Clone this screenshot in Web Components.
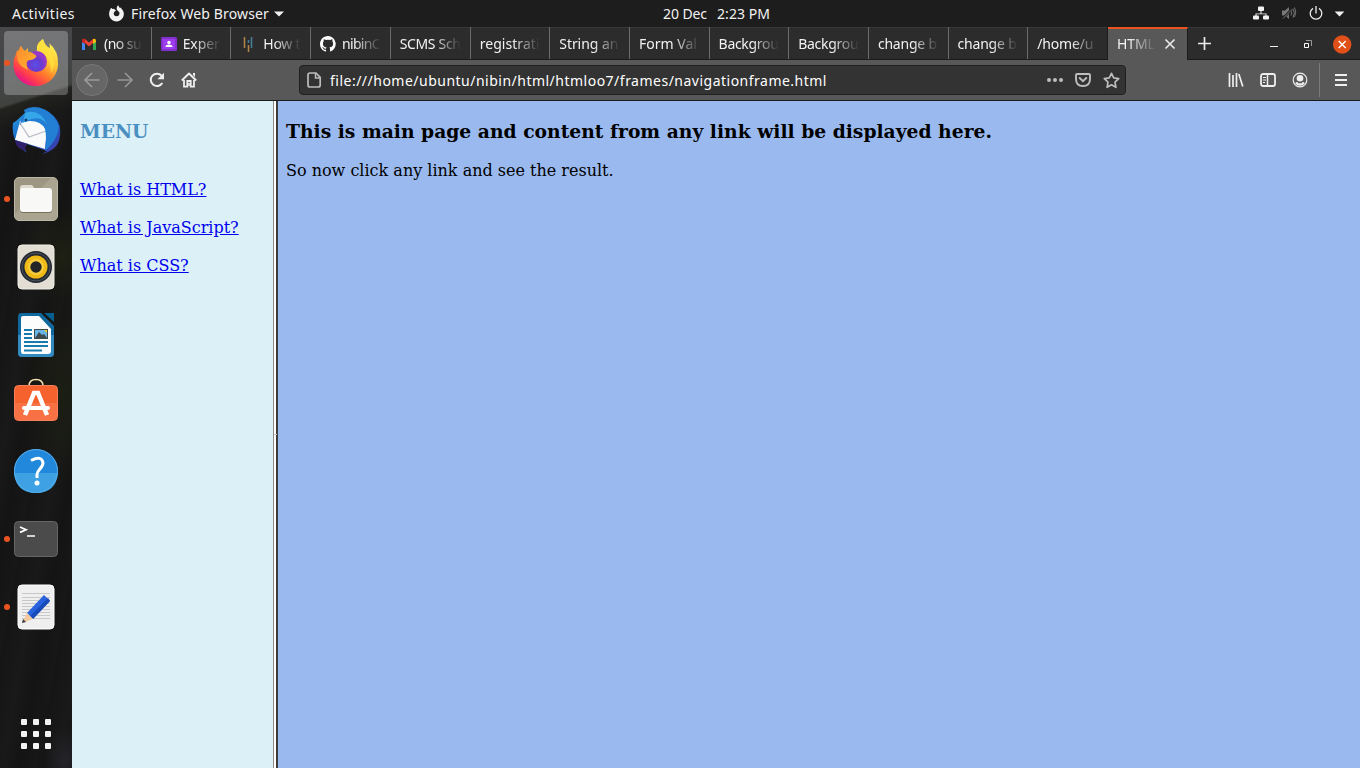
<!DOCTYPE html>
<html lang="en">
<head>
<meta charset="utf-8">
<title>HTML Frames</title>
<style>
html,body{margin:0;height:100%;overflow:hidden;background:#161616}
body{font-family:"Noto Sans","Open Sans",sans-serif;font-size:14px;color:#f2f2f2}
</style>
</head>
<body>
<ubuntu-desktop></ubuntu-desktop>
<script>
const define = (name, html, setup) => customElements.define(name, class extends HTMLElement {
  connectedCallback() {
    if (this.shadowRoot) return;
    const root = this.attachShadow({mode: 'open'});
    root.innerHTML = html;
    if (setup) setup(this, root);
  }
});

define('fit-label', `<style>:host{display:block;white-space:pre;line-height:20px}span{display:inline-block}</style><span></span>`, (host, root) => {
  const span = root.querySelector('span');
  span.textContent = host.getAttribute('text');
  const w = parseFloat(host.getAttribute('w'));
  if (w) {
    const gap = (w - span.getBoundingClientRect().width) / span.textContent.length;
    span.style.letterSpacing = gap.toFixed(3) + 'px';
  }
});

define('top-bar', `<style>
:host{display:grid;grid-template-columns:663px 1fr auto;height:27px;background:#1d1d1d;align-items:center;box-sizing:border-box;color:#f2f2f2}
.l,.c,.r{display:flex;align-items:center}
.l{padding-left:12px}.l svg.fx{margin:0 6px 0 33px}.c{gap:10px}.l .tri{margin-left:5px}
.r{padding:0 15px 2px 0}
svg{display:block}
</style>
<div class="l"><fit-label text="Activities" w="63"></fit-label>
<svg class="fx" width="17" height="17" viewBox="0 0 17 17"><path d="M2.3 4.3 3.2 2.8 4.4 4q.8-.3 1.7 0L8 5.6 6.2 7C5 8.500 6 11.300 8.600 11.300c2.500 0 3.500-2.300 2.500-4.300L9 5C8.200 3 9 1.200 10.400.3c.2 1.300.7 2 1.800 2.700l.9-.6c.2.900.4 1.400 1.100 2.200 3.800 4.500.5 11.800-5.600 11.800C2.300 16.400-.8 9.900 2.300 4.300z" fill="#f2f2f2"/></svg>
<fit-label text="Firefox Web Browser" w="138"></fit-label>
<svg class="tri" width="10" height="6" viewBox="0 0 10 6"><path d="M0 .5h10L5 5.500z" fill="#f2f2f2"/></svg></div>
<div class="c"><fit-label text="20 Dec" w="44"></fit-label><fit-label text="2:23 PM" w="53"></fit-label></div>
<div class="r">
<svg width="16" height="16" viewBox="0 0 16 16" fill="#f2f2f2"><rect x="5" y="1.500" width="6" height="4.500" rx="1"/><rect x="0" y="10.500" width="6" height="4" rx="1"/><rect x="10" y="10.500" width="6" height="4" rx="1"/><path d="M7.500 6v2.500H2.500V11h1V9.300h9V11h1V8.500H8.500V6z"/></svg>
<svg style="margin-left:12px" width="16" height="16" viewBox="0 0 16 16"><g fill="#777"><path d="M1 5.500h3L8 2v12l-4-3.500H1z"/></g><path d="M10 5.500q1.500 2.500 0 5M12 4q2.800 4 0 8.500M13.500 2.500q2.500 5 0 9.500" stroke="#777" fill="none"/><path d="M1.500 14 12.500 2.500" stroke="#1d1d1d" stroke-width="2.500"/><path d="M2 13.500 12 3.500" stroke="#777"/></svg>
<svg style="margin-left:12px" width="14" height="16" viewBox="0 0 14 16"><path d="M4 3.400a5.800 5.800 0 1 0 6 0M7 1v7.500" fill="none" stroke="#eee" stroke-width="1.300"/></svg>
<svg style="margin-left:11px" width="11" height="16" viewBox="0 0 11 16"><path d="M.7 6.500h9.600L5.500 11.500z" fill="#f2f2f2"/></svg>
</div>`);

define('dock-item', `<style>
:host{display:grid;grid-template-columns:72px;place-items:center;height:68px;position:relative}
.box{width:64px;height:64px;border-radius:4px;display:grid;place-items:center}
:host([active]) .box{background:rgba(255,255,255,.25)}
:host([running])::before{content:"";position:absolute;left:4px;top:31px;width:6px;height:6px;border-radius:50%;background:#e95420}
</style><div class="box"><slot></slot></div>`);

define('app-dock', `<style>
:host{display:flex;flex-direction:column;justify-content:space-between;width:72px;box-sizing:border-box;padding:2px 0 0;
background:linear-gradient(162deg,#48484a 0,#444548 48px,#40423f 76px,#22231f 79px,transparent 100px) top/100% 105px no-repeat,
radial-gradient(ellipse at 70% 50%,#1d2012,transparent 70%) 20px 180px/60px 100px no-repeat,
radial-gradient(ellipse at 70% 50%,#1b1e13,transparent 70%) 20px 270px/60px 190px no-repeat,
radial-gradient(ellipse,#24242a,transparent 70%) 45px 700px/40px 68px no-repeat,
repeating-linear-gradient(100deg,#151515 0,#191919 21px,#141414 37px,#171717 55px)}
svg{display:block}
</style>
<div>
<dock-item active running><svg width="48" height="50" viewBox="0 0 48 50"><defs>
<linearGradient id="a" x1=".85" y1=".1" x2=".25" y2=".95"><stop offset="0" stop-color="#fff14f"/><stop offset=".35" stop-color="#ffc233"/><stop offset=".6" stop-color="#ff7b2b"/><stop offset=".82" stop-color="#ff3c4e"/><stop offset="1" stop-color="#e5148a"/></linearGradient>
<radialGradient id="b" cx=".45" cy=".65"><stop offset="0" stop-color="#5750e8"/><stop offset=".6" stop-color="#6a3bd0"/><stop offset="1" stop-color="#9638c9"/></radialGradient>
<linearGradient id="c" x1="0" y1="0" x2="1" y2="1"><stop offset="0" stop-color="#ff8a30"/><stop offset="1" stop-color="#ffb62c"/></linearGradient></defs>
<path d="M4 16 5 12 7 14 9 8q2 4 4 5l3-3v4L23 15 25 12Q24 6 31 1q2 7 7 9 0-3-1-5 10 8 9 22C45 40 35 48 23 48S1 38 1.500 26Q1.500 20 4 16z" fill="url(#a)"/>
<circle cx="24.500" cy="23.500" r="10.500" fill="url(#b)"/>
<path d="M5 16 8.500 8q2 5 6 6 4-1 10 4-1 3-6 4-4 0-4 4 0 4 2 6-9-3-11-10z" fill="url(#c)"/>
<path d="M25 12Q24 5 31 1q1 7 9 14 5 11-1 20 0-14-8-20z" fill="#ffe23e" opacity=".75"/></svg></dock-item>
<dock-item><svg width="50" height="50" viewBox="0 0 50 50"><defs><linearGradient id="t" x1="0" y1="0" x2=".8" y2="1"><stop offset="0" stop-color="#2da9e8"/><stop offset=".45" stop-color="#1769c5"/><stop offset="1" stop-color="#3a3fb0"/></linearGradient></defs>
<path d="M2 17Q0 33 10 42l6 5q-5-7 0-9l20 7-5 3Q48 44 49 29 51 15 38 6 25-3 15 6L5 15z" fill="url(#t)"/>
<path d="M9 15 4 34l30 9Q36 30 35 18 22 12 9 15z" fill="#fafafa"/><path d="m9 17 9 14 17-6" fill="none" stroke="#b9bcc6" stroke-width="1.300"/><path d="M4 34q1 8 8 10l3 1q-2-5 2-7z" fill="#30206b"/>
<path d="M10 19Q8 13 14 7L13 4Q22-2 34 4q11 6 14 17-2 14-14 24 2-14 0-22-4-8-15-8-6 0-11 3z" fill="#237fd3"/><path d="M14 7Q28 2 36 18 30 10 20 13l-8 4z" fill="#36a7e9"/><circle cx="15" cy="14" r="1.500" fill="#123c73"/></svg></dock-item>
<dock-item running><svg width="46" height="46" viewBox="0 0 46 46"><rect x="1.500" y="1.500" width="43" height="43" rx="4.500" fill="#9d9683" stroke="#bdb7a6"/><path d="M2 38 38 2h4q2 0 2 3v36q0 3-3 3H5q-3 0-3-3z" fill="#aaa491"/><path d="M7 12q0-3 3-3h9l3 4v9H7z" fill="#dedacd"/><rect x="7" y="13" width="32" height="24" rx="3" fill="#77705f"/><rect x="7" y="12" width="32" height="24" rx="3" fill="#f8f8f7"/></svg></dock-item>
<dock-item><svg width="38" height="46" viewBox="0 0 38 46"><rect x="1" y="1" width="36" height="44" rx="4" fill="#e2ded3" stroke="#f1eee7"/><circle cx="19" cy="23" r="16" fill="#252b34"/><circle cx="19" cy="23" r="14" fill="none" stroke="#4c5058"/><circle cx="19" cy="23" r="11.500" fill="#efb916"/><circle cx="19" cy="23" r="8" fill="#f7cc3d"/><circle cx="19" cy="23" r="5.700" fill="#222426"/></svg></dock-item>
<dock-item><svg width="38" height="46" viewBox="0 0 38 46"><path d="M4 1h20l13 13v27q0 4-4 4H5q-4 0-4-4V5q0-4 3-4z" fill="#0f699e"/><path d="M1 23h36v18q0 4-4 4H5q-4 0-4-4z" fill="#3189bf"/><path d="M27 1h10v9z" fill="#075f90"/><path d="M4 6q0-2 2-2h16l12 13v22q0 3-3 3H6q-2 0-2-3z" fill="#fcfcfc"/><path d="M7 18h8M7 22h8M7 26h8M7 30h24M7 34h24M7 38.500h18" stroke="#187bad" stroke-width="2"/><rect x="17" y="17" width="14" height="10" fill="#3e4a4c"/><rect x="18" y="18" width="12" height="8" fill="#67b5e8"/><path d="m18 26 4-6 3 3 2-1 3 4z" fill="#3d494d"/><path d="M27 18h3v3z" fill="#f7cc20"/></svg></dock-item>
<dock-item><svg style="margin-top:-4px" width="46" height="46" viewBox="0 0 46 46"><path d="M16 9V8q0-6.500 7-6.500T30 8v1" fill="none" stroke="#f6dfae" stroke-width="1.500"/><rect x="1.500" y="7.500" width="43" height="35" rx="4" fill="#f5622d" stroke="#f6805c"/><path d="M2 25h42v13q0 4-4 4H6q-4 0-4-4z" fill="#f87144"/><path d="m12 37 9-22h4l9 22" fill="none" stroke="#fff" stroke-width="4.500"/><rect x="9" y="28" width="28" height="4" rx="2" fill="#fff"/></svg></dock-item>
<dock-item><svg width="46" height="46" viewBox="0 0 46 46"><circle cx="23" cy="23" r="22" fill="#2288dc"/><path d="M1 25h44Q43 45 23 45T1 25z" fill="#3da1e4"/><circle cx="23" cy="23" r="21.500" fill="none" stroke="#56adeb"/><path d="M18 12.500Q29 7 30 15c0 5-6 7-6 11.500v3.500" fill="none" stroke="#fff" stroke-width="3"/><circle cx="24" cy="35" r="2.500" fill="#fff"/></svg></dock-item>
<dock-item running><svg width="46" height="38" viewBox="0 0 46 38"><rect x="1.500" y="1.500" width="43" height="35" rx="4" fill="#4b4b4b" stroke="#666"/><path d="m7 7 6 2.700-6 2.700" fill="none" stroke="#fff" stroke-width="1.800"/><path d="M14 16h8" stroke="#fff" stroke-width="1.500"/></svg></dock-item>
<dock-item running><svg width="38" height="46" viewBox="0 0 38 46"><rect x="1" y="1" width="36" height="44" rx="4" fill="#efefef" stroke="#fff"/><path d="M5 9.500h28M5 13.500h28M5 16.500h28M5 19.500h28M5 22.500h28M5 25.500h28M5 28.500h28M5 31.500h28M5 34.500h28" stroke="#c8c8c8"/><path d="m10 29 17-18 6 6-17 18z" fill="#2862de"/><path d="m13 32 18-18 2 3-17 18z" fill="#174bb9"/><path d="m10 29-5 10 11-4z" fill="#f2c99f"/><path d="m6 35-1 4 4-1z" fill="#3c3c3c"/></svg></dock-item>
</div>
<dock-item><svg width="30" height="30" viewBox="0 0 30 30" fill="#f2f2f2"><rect width="6" height="6" rx="1"/><rect x="12" width="6" height="6" rx="1"/><rect x="24" width="6" height="6" rx="1"/><rect y="12" width="6" height="6" rx="1"/><rect x="12" y="12" width="6" height="6" rx="1"/><rect x="24" y="12" width="6" height="6" rx="1"/><rect y="24" width="6" height="6" rx="1"/><rect x="12" y="24" width="6" height="6" rx="1"/><rect x="24" y="24" width="6" height="6" rx="1"/></svg></dock-item>`);

define('browser-tab', `<style>
:host{display:flex;align-items:center;flex:0 0 79.67px;height:32px;box-sizing:border-box;padding:1px 9px 0 9px;border-right:1px solid #6b6b6b}
:host([last]){border-right-color:#1c1c1c}
:host([active]){flex-basis:80px;background:#585858;border-top:2px solid #e95420;padding:0 11px 2px 9px;height:33px;border-right-color:#1c1c1c}
.t{flex:1;min-width:0;-webkit-mask-image:linear-gradient(to left,transparent 0,#000 27px);mask-image:linear-gradient(to left,transparent 0,#000 27px)}
::slotted([slot=icon]){display:block;flex:none;margin-right:7px}
::slotted([slot=close]){display:block;flex:none;margin-left:8px}
</style><slot name="icon"></slot><div class="t"><slot></slot></div><slot name="close"></slot>`);

define('tab-strip', `<style>
:host{display:flex;height:33px;background:#2c2c2c;box-sizing:border-box;border-bottom:1px solid #1b1b1b;box-shadow:inset 0 1px #383838}
.plus{margin:9px 0 0 9px;display:block}
.ctl{margin-left:auto;display:flex;align-items:center;padding-right:8px;height:34px}svg{display:block}
</style>
<browser-tab><svg slot="icon" width="16" height="16" viewBox="0 0 16 16"><path d="M1 14V5h3v9z" fill="#4285f4"/><path d="M12 14V5h3v9z" fill="#34a853"/><path d="M1 6V4q1-2 3-1l4 3.500L12 3v4L8 10.500 4 7z" fill="#ea4335"/><path d="M12 3q3-1 3 2v1l-3 2z" fill="#fbbc04"/><path d="M1 5v1l3 2V3Q1 2 1 5z" fill="#c5221f"/></svg><fit-label text="(no su" w="37"></fit-label></browser-tab>
<browser-tab><svg slot="icon" style="margin-right:6px" width="16" height="16" viewBox="0 0 16 16"><rect y="1" width="16" height="14" rx="1.500" fill="#8430ce"/><rect x="2" y="3" width="12" height="10" fill="#9d3cec"/><circle cx="8" cy="6.500" r="1.700" fill="#fff"/><path d="M4.500 11q0-2.500 3.500-2.500t3.500 2.500z" fill="#fff"/></svg><fit-label text="Exper" w="37"></fit-label></browser-tab>
<browser-tab><svg slot="icon" style="margin-right:7px" width="16" height="16" viewBox="0 0 16 16"><path d="M4.500 1v11M8.500 9v7" stroke="#b18447" stroke-width="1.500"/><path d="M11.500 1v11M8.500 4v3" stroke="#477f9b" stroke-width="1.500"/></svg><fit-label text="How t" w="37"></fit-label></browser-tab>
<browser-tab><svg slot="icon" style="margin-right:6px" width="16" height="16" viewBox="0 0 16 16"><path fill="#fff" d="M8 0C3.580 0 0 3.580 0 8c0 3.540 2.290 6.530 5.470 7.590.4.070.55-.17.55-.38v-1.490c-2.230.48-2.690-1.070-2.690-1.070-.36-.92-.89-1.170-.89-1.170-.73-.5.050-.49.050-.49.810.060 1.230.83 1.230.83.72 1.230 1.880.87 2.340.66.070-.52.280-.87.510-1.070-1.780-.2-3.640-.89-3.640-3.950 0-.87.310-1.590.82-2.150-.08-.2-.36-1.020.08-2.120 0 0 .67-.21 2.200.82a7.500 7.500 0 0 1 4 0c1.530-1.040 2.200-.82 2.200-.82.44 1.100.16 1.920.08 2.120.51.560.82 1.270.82 2.150 0 3.070-1.870 3.750-3.650 3.950.290.250.54.730.54 1.480v2.200c0 .21.15.46.55.38A8 8 0 0 0 8 0z"/></svg><fit-label text="nibinC" w="38"></fit-label></browser-tab>
<browser-tab><fit-label text="SCMS Sch" w="61"></fit-label></browser-tab>
<browser-tab><fit-label text="registrati" w="60"></fit-label></browser-tab>
<browser-tab><fit-label text="String an" w="59"></fit-label></browser-tab>
<browser-tab><fit-label text="Form Val" w="58"></fit-label></browser-tab>
<browser-tab><fit-label text="Backgrou" w="60"></fit-label></browser-tab>
<browser-tab><fit-label text="Backgrou" w="60"></fit-label></browser-tab>
<browser-tab><fit-label text="change b" w="59"></fit-label></browser-tab>
<browser-tab><fit-label text="change b" w="59"></fit-label></browser-tab>
<browser-tab last><fit-label text="/home/u" w="56"></fit-label></browser-tab>
<browser-tab active><fit-label text="HTML" w="38"></fit-label><svg slot="close" width="12" height="12" viewBox="0 0 12 12"><path d="m1.500 1.500 9 9m0-9-9 9" stroke="#e8e8e8" stroke-width="1.700"/></svg></browser-tab>
<svg class="plus" width="15" height="15" viewBox="0 0 15 15"><path d="M7.500 1v13M1 7.500h13" stroke="#ececec" stroke-width="1.700"/></svg>
<div class="ctl">
<svg width="8" height="12" viewBox="0 0 8 12"><path d="M0 8.500h8" stroke="#eee"/></svg>
<svg style="margin-left:25px" width="9" height="9" viewBox="0 0 9 9"><path d="M1.500 3.500h4v4h-4z" fill="none" stroke="#fff"/><path d="M3 .5h5.500v5.500" fill="none" stroke="#999"/></svg>
<svg style="margin-left:21px" width="19" height="19" viewBox="0 0 19 19"><circle cx="9.200" cy="9.500" r="9.200" fill="#e2501a"/><path d="m5.700 6 7 7m0-7-7 7" stroke="#fff" stroke-width="1.400"/></svg>
</div>`);

define('nav-toolbar', `<style>
:host{display:flex;align-items:center;height:41px;background:#585858;box-sizing:border-box;border-bottom:1px solid #1b1b1e;padding:0 12px 0 4px}
svg{display:block;flex:none}
.back{width:30px;height:30px;border:1px solid #787878;border-radius:50%;background:#666;display:grid;place-items:center}
.url{display:flex;align-items:center;margin-left:102px;width:827px;height:30px;box-sizing:border-box;background:#333;border:1px solid #202020;border-radius:4px;padding:0 5px 0 6px;color:#fff}
.url fit-label{flex:1;margin-left:8px;padding-top:2px}
.sep{width:1px;height:34px;background:#7b7b7b;margin:0 14px 0 11px}
</style>
<div class="back"><svg width="16" height="16" viewBox="0 0 16 16"><path d="M15.500 8H1m7-7L1 8l7 7" fill="none" stroke="#9a9a9a" stroke-width="1.700"/></svg></div>
<svg style="margin-left:9px" width="16" height="16" viewBox="0 0 16 16"><path d="M.5 8H15M8 1l7 7-7 7" fill="none" stroke="#959595" stroke-width="1.700"/></svg>
<svg style="margin-left:16px" width="16" height="16" viewBox="0 0 16 16"><path d="M13.300 11A6.200 6.200 0 1 1 12.600 3.700" fill="none" stroke="#eee" stroke-width="2"/><path d="M15 .7v6.600H8.400z" fill="#eee"/></svg>
<svg style="margin-left:16px" width="16" height="16" viewBox="0 0 16 16"><path d="m.8 8.500 7.200-7 7.200 7" fill="none" stroke="#eee" stroke-width="1.900" stroke-linejoin="round"/><path d="M3 8v6.700h3.300V9h3.400v5.700H13V8" fill="none" stroke="#eee" stroke-width="1.800"/><path d="M12 1h2v4l-2-2zM7.200 11h1.600v3H7.200z" fill="#eee"/></svg>
<div class="url"><svg width="16" height="18" viewBox="0 0 16 18"><path d="M4 2h6l4.200 4.300V14q0 2-2 2H4q-2 0-2-2V4q0-2 2-2z" fill="none" stroke="#bdbdbd" stroke-width="1.700"/><path d="M9.500 2v5h4.500" fill="none" stroke="#bdbdbd" stroke-width="1.500"/></svg>
<fit-label text="file:///home/ubuntu/nibin/html/htmloo7/frames/navigationframe.html" w="497"></fit-label>
<svg width="16" height="16" viewBox="0 0 16 16" fill="#bdbdbd"><circle cx="2" cy="8" r="2"/><circle cx="8" cy="8" r="2"/><circle cx="14" cy="8" r="2"/></svg>
<svg style="margin-left:12px" width="16" height="16" viewBox="0 0 16 16"><path d="M2 2h12q1 0 1 1v4q0 7-7 7T1 7V3q0-1 1-1z" fill="none" stroke="#bdbdbd" stroke-width="1.900"/><path d="m4.700 6 3.300 3.200L11.300 6" fill="none" stroke="#bdbdbd" stroke-width="1.900" stroke-linecap="round"/></svg>
<svg style="margin-left:12px" width="17" height="17" viewBox="0 0 17 17"><path d="m8.500 1.300 2.200 4.600 5 .7-3.700 3.500.9 5.200-4.400-2.500-4.400 2.500.9-5.200L1.300 6.600l5-.7z" fill="none" stroke="#bdbdbd" stroke-width="1.700" stroke-linejoin="round"/></svg></div>
<svg style="margin-left:auto" width="16" height="16" viewBox="0 0 16 16"><path d="M1.500 1v14M5 3v12M8.500 1v14M10.800 2l4 12.500" stroke="#eee" stroke-width="1.700"/></svg>
<svg style="margin-left:16px" width="16" height="16" viewBox="0 0 16 16"><rect x="1" y="2" width="14" height="12" rx="2" fill="none" stroke="#eee" stroke-width="1.800"/><path d="M7.500 2v12" stroke="#eee" stroke-width="1.500"/><path d="M3 5.500h3M3 8h3M3 10.500h2" stroke="#eee"/></svg>
<svg style="margin-left:16px" width="16" height="16" viewBox="0 0 16 16"><circle cx="8" cy="8" r="6.800" fill="none" stroke="#eee" stroke-width="1.200"/><circle cx="8" cy="6.300" r="3.300" fill="#eee"/><path d="M3.200 11.200q2-2.200 3 0h3.600q1-2.200 3 0Q11 13.800 8 13.800t-4.800-2.600z" fill="#eee"/></svg>
<div class="sep"></div>
<svg width="14" height="16" viewBox="0 0 14 16"><path d="M1 3h12M1 8h12M1 13h12" stroke="#eee" stroke-width="2"/></svg>`);

define('menu-frame', `<style>
:host{display:block;background:#dbf0f7;padding:0 8px;font:16px/19px "DejaVu Serif",serif;color:#000}
h3{margin:18.720px 0;font-size:18.720px;line-height:22px;color:#4a8fc1}
nav{display:grid;gap:19px;justify-items:start;padding-top:20px}a{color:#0000ee}
</style><h3>MENU</h3><nav><a href="#">What is HTML?</a><a href="#">What is JavaScript?</a><a href="#">What is CSS?</a></nav>`);

define('main-frame', `<style>
:host{display:block;background:#9abaef;padding:0 8px;font:16px/19px "DejaVu Serif",serif;color:#000}
h3{margin:18.720px 0 19.500px;font-size:18.720px;line-height:22px;letter-spacing:.01px}p{margin:0}
</style><h3>This is main page and content from any link will be displayed here.</h3><p>So now click any link and see the result.</p>`);

define('frame-set', `<style>
:host{display:grid;grid-template-columns:201px 5px 1fr}
.bar{background:linear-gradient(to right,#8e8984 1px,#fff 1px 3px,#3b3b3b 3px);display:grid;place-items:center}
.bar i{width:3px;height:1px;background:#ccc}
</style><menu-frame></menu-frame><div class="bar"><i></i></div><main-frame></main-frame>`);

define('ubuntu-desktop', `<style>
:host{display:grid;grid-template:27px 741px / 72px 1288px;width:1360px;height:768px;overflow:hidden}
top-bar{grid-column:1 / 3}
.win{display:grid;grid-template:33px 41px 1fr / 1288px}
</style><top-bar></top-bar><app-dock></app-dock><div class="win"><tab-strip></tab-strip><nav-toolbar></nav-toolbar><frame-set></frame-set></div>`);
</script>
</body>
</html>
